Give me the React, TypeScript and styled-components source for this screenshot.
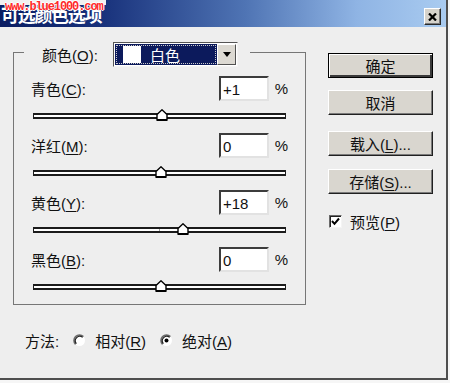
import React from 'react';
import styled, { createGlobalStyle } from 'styled-components';

interface IAdjust {
  id: string;
  label: string;
  hotkey: string;
  value: number;
}

const adjustments: IAdjust[] = [
  { id: 'cyan', label: '青色', hotkey: 'C', value: 1 },
  { id: 'magenta', label: '洋红', hotkey: 'M', value: 0 },
  { id: 'yellow', label: '黄色', hotkey: 'Y', value: 18 },
  { id: 'black', label: '黑色', hotkey: 'B', value: 0 },
];

const TRACK_WIDTH = 253;

function formatValue(v: number) {
  return v > 0 ? `+${v}` : `${v}`;
}

function thumbLeft(v: number) {
  return Math.round(((v + 100) / 200) * TRACK_WIDTH) - 6;
}

function App() {
  return (
    <>
      <GlobalStyle />
      <Window>
        <Watermark>www.blue1000.com</Watermark>
        <TitleBar>
          <Title>可选颜色选项</Title>
          <CloseButton aria-label="关闭">
            <svg width="9" height="8" viewBox="0 0 9 8">
              <path d="M1 0.5 L8 7.5 M8 0.5 L1 7.5" stroke="#000" strokeWidth="2.2" />
            </svg>
          </CloseButton>
        </TitleBar>
        <Body>
          <LeftColumn>
            <Group>
              <Legend>
                <LegendLabel>
                  颜色(<Hot>O</Hot>):
                </LegendLabel>
                <Combo>
                  <ComboValue>
                    <Swatch />
                    <span>白色</span>
                  </ComboValue>
                  <ComboArrow>
                    <svg width="8" height="5" viewBox="0 0 8 5">
                      <path d="M0 0 H8 L4 5 Z" fill="#000" />
                    </svg>
                  </ComboArrow>
                </Combo>
              </Legend>
              {adjustments.map(a => (
                <Row key={a.id}>
                  <RowHeader>
                    <RowLabel>
                      {a.label}(<Hot>{a.hotkey}</Hot>):
                    </RowLabel>
                    <ValueInput readOnly value={formatValue(a.value)} />
                    <Percent>%</Percent>
                  </RowHeader>
                  <Track>
                    <CenterMark />
                    <Thumb style={{ left: thumbLeft(a.value) }} width="12" height="12" viewBox="0 0 12 12">
                      <path d="M1 5.5 L6 0.8 L11 5.5 V11 H1 Z" fill="#fff" stroke="#000" strokeWidth="1.4" />
                      <path d="M1 11 H11" stroke="#000" strokeWidth="2" />
                    </Thumb>
                  </Track>
                </Row>
              ))}
            </Group>
            <MethodRow>
              <MethodLabel>方法:</MethodLabel>
              <RadioOption>
                <Radio checked={false} />
                <span>
                  相对(<Hot>R</Hot>)
                </span>
              </RadioOption>
              <RadioOption>
                <Radio checked />
                <span>
                  绝对(<Hot>A</Hot>)
                </span>
              </RadioOption>
            </MethodRow>
          </LeftColumn>
          <Side>
            <DialogButton $isDefault>确定</DialogButton>
            <DialogButton $space={12}>取消</DialogButton>
            <DialogButton $space={16}>
              载入(<Hot>L</Hot>)...
            </DialogButton>
            <DialogButton $space={13}>
              存储(<Hot>S</Hot>)...
            </DialogButton>
            <CheckRow>
              <CheckBox>
                <svg width="9" height="9" viewBox="0 0 9 9">
                  <path d="M1 4 L3.5 6.8 L8 1.5" stroke="#000" strokeWidth="2" fill="none" />
                </svg>
              </CheckBox>
              <span>
                预览(<Hot>P</Hot>)
              </span>
            </CheckRow>
          </Side>
        </Body>
      </Window>
    </>
  );
}

function Radio({ checked }: { checked: boolean }) {
  return (
    <RadioIcon width="13" height="13" viewBox="0 0 13 13">
      <circle cx="6.5" cy="6.5" r="5.5" fill="#fff" />
      <path d="M2.6 10.4 A5.5 5.5 0 0 1 10.4 2.6" stroke="#6a6a6a" strokeWidth="1.6" fill="none" />
      <path d="M3.4 9.6 A4.4 4.4 0 0 1 9.6 3.4" stroke="#222" strokeWidth="1.2" fill="none" />
      {checked && <circle cx="6.5" cy="6.5" r="2" fill="#000" />}
    </RadioIcon>
  );
}

const GlobalStyle = createGlobalStyle`
  html, body {
    margin: 0;
    padding: 0;
    background: #f6f6f6;
  }
  body {
    font-family: "Liberation Sans", "Noto Sans CJK SC", sans-serif;
    font-size: 15px;
    color: #111;
  }
`;

const Window = styled.div`
  position: relative;
  width: 446px;
  height: 378px;
  background: #eeeeee;
  border-right: 2px solid #4e4e4e;
  border-bottom: 2px solid #4e4e4e;
  display: flex;
  flex-direction: column;
  overflow: hidden;
`;

const Watermark = styled.span`
  position: absolute;
  top: 0;
  left: 0;
  z-index: 2;
  padding: 1px 3px 0 5px;
  font-family: "Liberation Mono", monospace;
  font-size: 12px;
  font-weight: bold;
  line-height: 13px;
  letter-spacing: -1.1px;
  color: #ff2a2a;
  background: linear-gradient(to bottom, #f1f1f1 0, #f1f1f1 5px, transparent 5px);
  text-shadow: 1px 0 0 #fff, -1px 0 0 #fff, 0 1px 0 #fff, 0 -1px 0 #fff;
`;

const TitleBar = styled.div`
  height: 27px;
  flex-shrink: 0;
  display: flex;
  justify-content: space-between;
  padding-right: 5px;
  overflow: hidden;
  background: linear-gradient(90deg, #0a1d62 0%, #17307a 22%, #4f74b4 55%, #8fb4e4 80%, #a9cbf0 100%);
`;

const Title = styled.div`
  margin-top: 5px;
  padding-left: 1px;
  font-family: "Noto Sans CJK SC", sans-serif;
  font-size: 18px;
  font-weight: bold;
  line-height: 19px;
  letter-spacing: -1.3px;
  color: #fff;
`;

const CloseButton = styled.button`
  margin-top: 8px;
  width: 17px;
  height: 17px;
  padding: 0;
  display: flex;
  align-items: center;
  justify-content: center;
  background: #d6d3cc;
  border: 1px solid;
  border-color: #fff #2a2a2a #2a2a2a #fff;
  box-shadow: inset -1px -1px #7c7c7c;
`;

const Body = styled.div`
  flex: 1;
  display: flex;
  padding: 15px 0 0 13px;
`;

const LeftColumn = styled.div`
  width: 293px;
  display: flex;
  flex-direction: column;
`;

const Group = styled.fieldset`
  margin: 0;
  padding: 0 17px 14px 17px;
  min-width: 0;
  border: 1px solid #767676;
`;

const Legend = styled.legend`
  margin-left: -7px;
  height: 20px;
  padding: 0 12px 0 18px;
  display: flex;
  align-items: flex-start;
`;

const LegendLabel = styled.span`
  width: 71px;
  margin-top: 2px;
`;

const Hot = styled.u`
  text-decoration: underline;
  text-underline-offset: 2px;
`;

const Combo = styled.div`
  width: 125px;
  height: 25px;
  flex-shrink: 0;
  box-sizing: border-box;
  display: flex;
  padding: 1px;
  background: #fff;
  border: 1px solid;
  border-color: #555 #f4f4f4 #f4f4f4 #555;
`;

const ComboValue = styled.div`
  flex: 1;
  display: flex;
  align-items: center;
  gap: 9px;
  padding-left: 8px;
  background: #0c1a5c;
  outline: 1px dotted #c9c9c9;
  outline-offset: -2px;
  color: #fff;
  font-family: "Noto Sans CJK SC", sans-serif;
  font-size: 15px;
`;

const Swatch = styled.span`
  width: 18px;
  height: 17px;
  background: #fff;
`;

const ComboArrow = styled.div`
  width: 17px;
  display: flex;
  align-items: center;
  justify-content: center;
  background: #dcd9d2;
  border: 1px solid;
  border-color: #fff #505050 #505050 #fff;
`;

const Row = styled.div`
  margin-top: 14px;
  & + & {
    margin-top: 14px;
  }
`;

const RowHeader = styled.div`
  display: flex;
  align-items: center;
  height: 25px;
`;

const RowLabel = styled.span`
  flex: 1;
`;

const ValueInput = styled.input`
  width: 50px;
  height: 25px;
  box-sizing: border-box;
  margin: 0;
  padding: 1px 0 0 2px;
  border: 2px solid;
  border-color: #3c3c3c #e2e2e2 #e2e2e2 #3c3c3c;
  background: #fff;
  font-family: "Liberation Sans", sans-serif;
  font-size: 15px;
  color: #111;
  outline: none;
`;

const Percent = styled.span`
  width: 19px;
  text-align: right;
  font-size: 15px;
`;

const Track = styled.div`
  position: relative;
  margin: 12px 0 0 2px;
  width: ${TRACK_WIDTH}px;
  height: 6px;
  box-sizing: border-box;
  background: #fff;
  border: 2px solid #1b1b1b;
  border-width: 2px 1px;
`;

const CenterMark = styled.span`
  position: absolute;
  left: 125px;
  top: 0;
  width: 1px;
  height: 2px;
  background: #9a9a9a;
`;

const Thumb = styled.svg`
  position: absolute;
  top: -6px;
`;

const MethodRow = styled.div`
  margin-top: 26px;
  padding-left: 12px;
  display: flex;
  align-items: center;
  height: 18px;
`;

const MethodLabel = styled.span`
  margin-right: 14px;
`;

const RadioOption = styled.label`
  display: flex;
  align-items: center;
  gap: 9px;
  margin-right: 14px;
`;

const RadioIcon = styled.svg`
  flex-shrink: 0;
`;

const Side = styled.div`
  margin: 11px 0 0 22px;
  display: flex;
  flex-direction: column;
`;

const DialogButton = styled.button<{ $isDefault?: boolean; $space?: number }>`
  width: 105px;
  height: 25px;
  margin: ${props => props.$space || 0}px 0 0;
  padding: 0;
  box-sizing: border-box;
  background: #d9d6cf;
  font-family: "Liberation Sans", "Noto Sans CJK SC", sans-serif;
  font-size: 15px;
  color: #111;
  border: 1px solid;
  border-color: ${props => (props.$isDefault ? '#000' : '#fff #202020 #202020 #fff')};
  box-shadow: ${props =>
    props.$isDefault
      ? 'inset 1px 1px #fff, inset -2px -2px #3a3a3a'
      : 'inset -1px -1px #7a7a7a'};
`;

const CheckRow = styled.label`
  margin: 19px 0 0 1px;
  display: flex;
  align-items: center;
  gap: 8px;
  height: 16px;
`;

const CheckBox = styled.span`
  width: 13px;
  height: 13px;
  box-sizing: border-box;
  display: flex;
  align-items: center;
  justify-content: center;
  background: #fff;
  border: 1px solid;
  border-color: #6a6a6a #f4f4f4 #f4f4f4 #6a6a6a;
  box-shadow: inset 1px 1px #222;
`;

export default App;
